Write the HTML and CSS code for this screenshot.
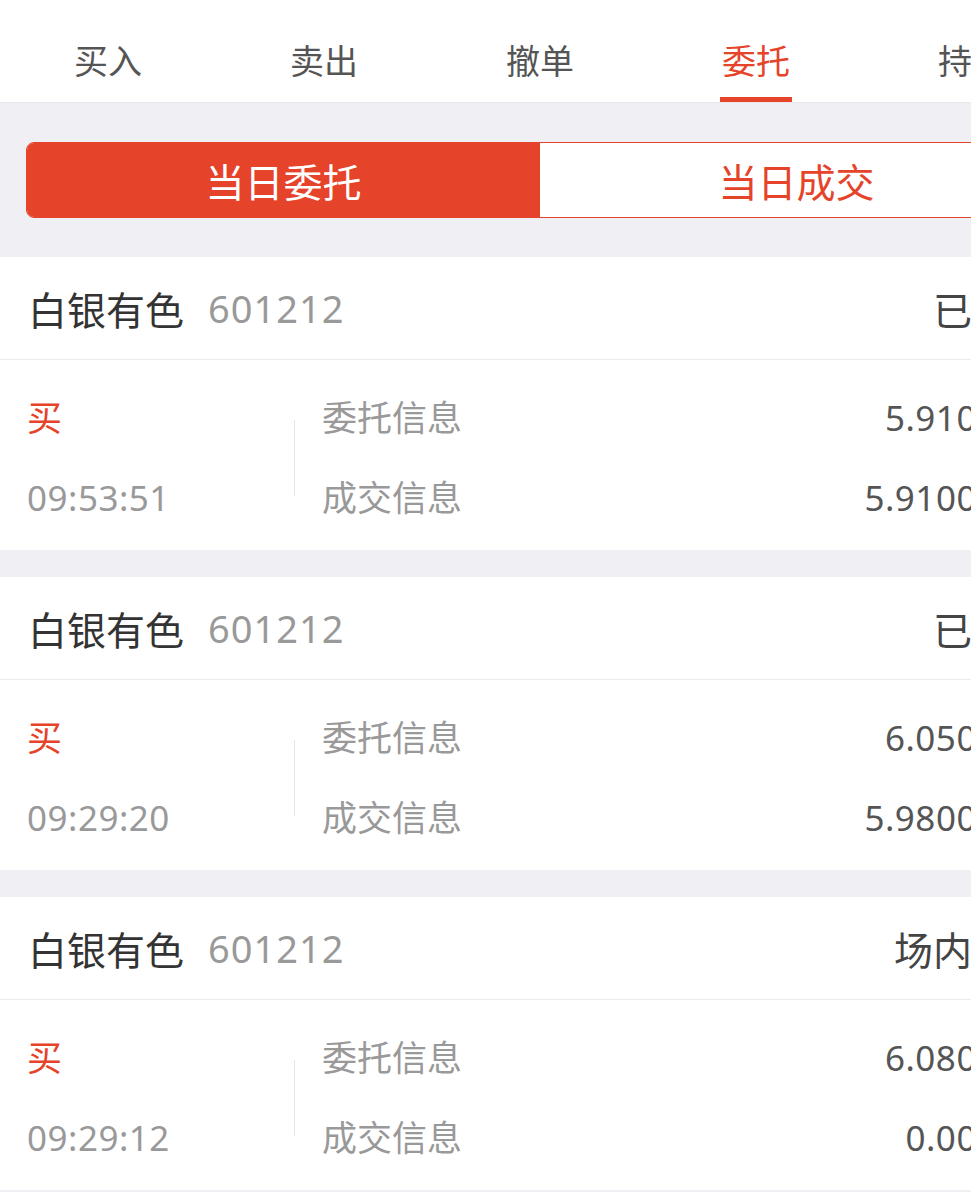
FILE: index.html
```html
<!DOCTYPE html>
<html lang="zh-CN">
<head>
  <meta charset="UTF-8">
  <meta name="viewport" content="width=device-width, initial-scale=1.0">
  <title>委托</title>
  <link rel="stylesheet" href="styles.css">
</head>
<body>

<div class="page">

  <!-- 顶部标签 -->
  <div class="tabs">
    <div class="tab">买入</div>
    <div class="tab">卖出</div>
    <div class="tab">撤单</div>
    <div class="tab active">委托</div>
    <div class="tab">持仓</div>
  </div>

  <!-- 当日委托 / 当日成交 切换 -->
  <div class="switch-wrap">
    <div class="switch">
      <div class="switch-item on">当日委托</div>
      <div class="switch-item">当日成交</div>
    </div>
  </div>

  <!-- 委托列表 -->
  <div class="order">
    <div class="order-head">
      <span class="name">白银有色</span>
      <span class="code">601212</span>
      <span class="status">已成交</span>
    </div>
    <div class="order-body">
      <div class="side-col">
        <div class="line side">买</div>
        <div class="line num">09:53:51</div>
      </div>
      <div class="sep"></div>
      <div class="info-col">
        <div class="line label">委托信息</div>
        <div class="line label">成交信息</div>
      </div>
      <div class="value-col">
        <div class="line num value">5.910/500</div>
        <div class="line num value">5.9100/500</div>
      </div>
    </div>
  </div>

  <div class="order">
    <div class="order-head">
      <span class="name">白银有色</span>
      <span class="code">601212</span>
      <span class="status">已成交</span>
    </div>
    <div class="order-body">
      <div class="side-col">
        <div class="line side">买</div>
        <div class="line num">09:29:20</div>
      </div>
      <div class="sep"></div>
      <div class="info-col">
        <div class="line label">委托信息</div>
        <div class="line label">成交信息</div>
      </div>
      <div class="value-col">
        <div class="line num value">6.050/500</div>
        <div class="line num value">5.9800/500</div>
      </div>
    </div>
  </div>

  <div class="order">
    <div class="order-head">
      <span class="name">白银有色</span>
      <span class="code">601212</span>
      <span class="status">场内撤单</span>
    </div>
    <div class="order-body">
      <div class="side-col">
        <div class="line side">买</div>
        <div class="line num">09:29:12</div>
      </div>
      <div class="sep"></div>
      <div class="info-col">
        <div class="line label">委托信息</div>
        <div class="line label">成交信息</div>
      </div>
      <div class="value-col">
        <div class="line num value">6.080/500</div>
        <div class="line num value">0.0000/0</div>
      </div>
    </div>
  </div>

</div>

</body>
</html>
```

FILE: styles.css
```css
html, body {
  margin: 0;
  padding: 0;
  overflow: hidden;
  background-color: #efeff4;
}

body {
  font-family: "Noto Sans", "Noto Sans CJK SC", sans-serif;
  color: #333;
}

.page {
  width: 1080px;
}

/* 顶部标签 */
.tabs {
  display: flex;
  height: 102px;
  background-color: #fff;
  border-bottom: 1px solid #e8e8ec;
}

.tab {
  flex: 1;
  display: flex;
  align-items: center;
  justify-content: center;
  padding-top: 17px;
  font-size: 34px;
  color: #555;
  position: relative;
}

.tab.active {
  color: #e5432a;
}

.tab.active::after {
  content: "";
  position: absolute;
  left: 50%;
  bottom: 0;
  width: 72px;
  height: 5px;
  margin-left: -36px;
  background-color: #e5432a;
}

/* 切换 */
.switch-wrap {
  padding: 39px 26px 39px;
}

.switch {
  display: flex;
  height: 76px;
  border: 1px solid #e5432a;
  border-radius: 8px;
  overflow: hidden;
  box-sizing: border-box;
}

.switch-item {
  flex: 1;
  display: flex;
  align-items: center;
  justify-content: center;
  font-size: 39px;
  color: #e5432a;
  background-color: #fff;
}

.switch-item.on {
  color: #fff;
  background-color: #e5432a;
}

/* 委托卡片 */
.order {
  background-color: #fff;
  margin-bottom: 27px;
}

.order-head {
  display: flex;
  align-items: center;
  height: 102px;
  padding: 0 30px 0 28px;
  border-bottom: 1px solid #ebebeb;
}

.name {
  font-size: 39px;
  color: #333;
}

.code {
  font-size: 38px;
  color: #999;
  margin-left: 24px;
  letter-spacing: 1px;
}

.status {
  margin-left: auto;
  font-size: 39px;
  color: #444;
}

.order-body {
  display: flex;
  align-items: center;
  height: 190px;
  padding: 6px 28px 0 27px;
  box-sizing: border-box;
}

.line {
  height: 80px;
  line-height: 80px;
  font-size: 35px;
  white-space: nowrap;
}

.side-col {
  width: 267px;
}

.side {
  color: #e5432a;
}

.num {
  color: #999;
  letter-spacing: 0.5px;
}

.sep {
  width: 1px;
  height: 76px;
  background-color: #e6e6e6;
}

.info-col {
  margin-left: 27px;
}

.label {
  color: #999;
}

.value-col {
  margin-left: auto;
  text-align: right;
}

.value {
  color: #555;
}
```
